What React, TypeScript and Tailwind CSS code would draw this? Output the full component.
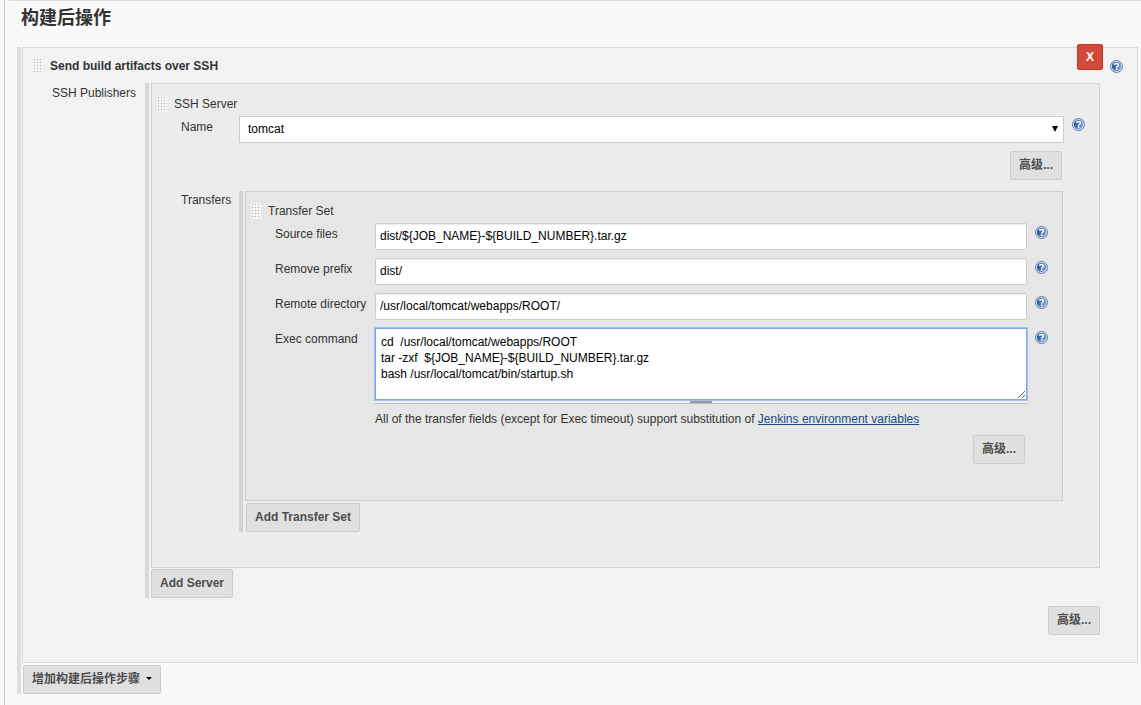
import React from "react";

const DragHandle: React.FC = () => (
  <svg width="10" height="16" className="shrink-0" shapeRendering="crispEdges" aria-hidden="true">
    <defs>
      <pattern id="grip" width="3" height="3" patternUnits="userSpaceOnUse">
        <rect width="3" height="3" fill="#fafafa" />
        <rect x="1" y="0" width="1" height="3" fill="#e6e6e6" />
        <rect x="0" y="1" width="3" height="1" fill="#e6e6e6" />
        <rect x="1" y="1" width="1" height="1" fill="#c4c4c4" />
      </pattern>
    </defs>
    <rect width="10" height="16" fill="url(#grip)" />
  </svg>
);

const HelpLink: React.FC<{ topic: string }> = ({ topic }) => (
  <a href="#help" aria-label={`Help: ${topic}`} className="block shrink-0">
    <svg width="13" height="13" viewBox="0 0 13 13" fill="none" aria-hidden="true">
      <defs>
        <linearGradient id="helpFill" x1="0" y1="0.2" x2="1" y2="0.8">
          <stop offset="0" stopColor="#1f4a8c" />
          <stop offset="0.5" stopColor="#4a74b0" />
          <stop offset="1" stopColor="#8fadd6" />
        </linearGradient>
      </defs>
      <circle cx="6.5" cy="6.5" r="6" fill="#d3dff0" stroke="#5a7db3" />
      <circle cx="6.5" cy="6.5" r="4.6" fill="url(#helpFill)" />
      <path d="M4.7 5C4.7 2.9 8.4 2.9 8.4 5c0 1.3-1.8 1.2-1.8 2.7" stroke="#fff" strokeWidth="1.5" />
      <rect x="5.8" y="8.5" width="1.6" height="1.5" fill="#fff" />
    </svg>
  </a>
);

interface ButtonProps {
  children: React.ReactNode;
  className?: string;
}

const Button: React.FC<ButtonProps> = ({ children, className = "" }) => (
  <button
    type="button"
    className={`h-[29px] px-2 pb-0.5 rounded-xs border border-[#ccc] bg-[#e0e0e0] font-bold text-[#4d4d4d] whitespace-nowrap ${className}`}
  >
    {children}
  </button>
);

interface TransferField {
  id: string;
  label: string;
  value: string;
}

const transferFields: TransferField[] = [
  { id: "sourceFiles", label: "Source files", value: "dist/${JOB_NAME}-${BUILD_NUMBER}.tar.gz" },
  { id: "removePrefix", label: "Remove prefix", value: "dist/" },
  { id: "remoteDirectory", label: "Remote directory", value: "/usr/local/tomcat/webapps/ROOT/" },
];

const execCommand = [
  "cd  /usr/local/tomcat/webapps/ROOT",
  "tar -zxf  ${JOB_NAME}-${BUILD_NUMBER}.tar.gz",
  "bash /usr/local/tomcat/bin/startup.sh",
].join("\n");

const TransferSet: React.FC = () => (
  <div className="border border-[#ccc] bg-[#e6e6e6] pt-[9px] pb-9">
    <div className="flex items-center gap-[7px] h-5 pl-[5px] mb-0.5">
      <DragHandle />
      <span>Transfer Set</span>
    </div>

    {transferFields.map((field) => (
      <div key={field.id} className="flex items-start mb-2">
        <label htmlFor={field.id} className="w-[129px] shrink-0 pl-[29px] leading-[22px] whitespace-nowrap">
          {field.label}
        </label>
        <input
          id={field.id}
          type="text"
          defaultValue={field.value}
          className="flex-1 min-w-0 h-[27px] px-1 pb-0.5 rounded-xs border border-[#ccc] bg-white text-black shadow-[inset_0_1px_1px_rgba(0,0,0,0.075)]"
        />
        <div className="w-[35px] pl-2 pt-[3px]">
          <HelpLink topic={field.label} />
        </div>
      </div>
    ))}

    {/* Exec command */}
    <div className="flex items-start">
      <label htmlFor="execCommand" className="w-[129px] shrink-0 pl-[29px] leading-[22px] whitespace-nowrap">
        Exec command
      </label>
      <div className="flex-1 min-w-0">
        <textarea
          id="execCommand"
          defaultValue={execCommand}
          spellCheck={false}
          className="block w-full h-[72px] px-[5px] py-[5px] border border-[#7ba7ec] bg-white text-black leading-4 outline-1 outline-[#a3c1f5]"
        />
        <div className="flex items-end justify-center h-1 border-b border-[#bbb] bg-[#f0f0f0]">
          <div className="w-[22px] h-[2px] bg-[#999]" />
        </div>
        <p className="mt-[5px] leading-5">
          All of the transfer fields (except for Exec timeout) support substitution of{" "}
          <a href="#env" className="text-[#204a87] underline">
            Jenkins environment variables
          </a>
        </p>
        <div className="flex justify-end mt-1.5 pr-0.5">
          <Button>高级...</Button>
        </div>
      </div>
      <div className="w-[35px] pl-2 pt-[3px]">
        <HelpLink topic="Exec command" />
      </div>
    </div>
  </div>
);

const SshServer: React.FC = () => (
  <div className="border border-[#d2d2d2] bg-[#ececec] pt-2.5 pb-[35px]">
    <div className="flex items-center gap-[7px] h-5 pl-[5px] mb-0.5">
      <DragHandle />
      <span>SSH Server</span>
    </div>

    <div className="flex items-start">
      <label htmlFor="serverName" className="w-[87px] shrink-0 pl-[29px] leading-[22px]">
        Name
      </label>
      <div className="relative flex-1 min-w-0">
        <select
          id="serverName"
          className="block w-full h-[27px] pl-2 pr-5 pb-0.5 appearance-none border border-[#ccc] bg-white text-black"
        >
          <option>tomcat</option>
        </select>
        <svg width="6" height="6" className="absolute right-[6px] top-[10px] pointer-events-none" aria-hidden="true">
          <path d="M0 0h6L3 6z" fill="#000" />
        </svg>
      </div>
      <div className="w-[35px] pl-2 pt-0.5">
        <HelpLink topic="Name" />
      </div>
    </div>

    <div className="flex justify-end mt-2 pr-[37px]">
      <Button>高级...</Button>
    </div>

    {/* Transfers */}
    <div className="flex items-start mt-[11px] pr-9">
      <div className="w-[87px] shrink-0 pl-[29px] leading-[18px]">Transfers</div>
      <div className="flex-1 min-w-0 border-l-4 border-[#d3d3d3] pl-0.5">
        <TransferSet />
        <Button className="block mt-0.5 ml-px">Add Transfer Set</Button>
      </div>
    </div>
  </div>
);

const App: React.FC = () => {
  return (
    <div className="min-h-screen bg-[#f9f9f9] pl-1 font-['Liberation_Sans','Noto_Sans_CJK_SC',sans-serif] text-xs text-[#333]">
      <div className="min-h-screen border-l border-[#ccc] pl-1">
        <div className="border-t border-[#ddd] pt-[5px] pl-2 pr-[3px]">
          <h1 className="pl-1 mb-[17px] text-lg leading-6 font-bold">构建后操作</h1>

          <div className="border-l-4 border-[#ddd] pl-px">
            <section className="relative border border-[#d8d8d8] bg-[#f2f2f2] pt-2 pb-[27px]">
              <div className="flex items-center gap-[7px] h-5 pl-2.5 pr-[14px] mb-[7px]">
                <DragHandle />
                <b className="flex-1">Send build artifacts over SSH</b>
                <HelpLink topic="Send build artifacts over SSH" />
              </div>
              <button
                type="button"
                className="absolute -top-1 right-[34px] size-[26px] rounded-xs border border-[#bd362f] bg-[#d24939] font-bold text-white"
              >
                X
              </button>

              {/* SSH Publishers */}
              <div className="flex items-start pr-[37px]">
                <div className="w-[122px] shrink-0 pl-[29px] leading-5">SSH Publishers</div>
                <div className="flex-1 min-w-0 border-l-4 border-[#d8d8d8] pl-0.5">
                  <SshServer />
                  <Button className="block mt-px">Add Server</Button>
                </div>
              </div>

              <div className="flex justify-end mt-2 pr-[37px]">
                <Button>高级...</Button>
              </div>
            </section>

            <Button className="flex items-center gap-1.5 mt-0.5 ml-px">
              增加构建后操作步骤
              <svg width="6" height="3" aria-hidden="true">
                <path d="M0 0h6L3 3z" fill="#000" />
              </svg>
            </Button>
          </div>
        </div>
      </div>
    </div>
  );
};

export default App;
